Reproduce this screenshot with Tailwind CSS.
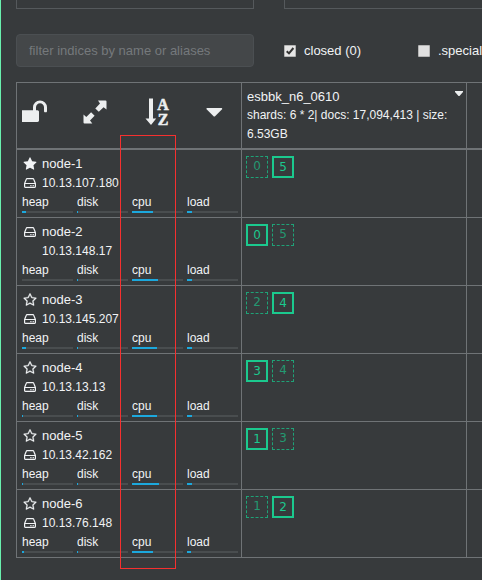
<!DOCTYPE html>
<html lang="en">
<head>
<meta charset="utf-8">
<title>Cluster overview</title>
<script src="https://cdn.jsdelivr.net/npm/@tailwindcss/browser@4"></script>
</head>
<body class="w-[482px] h-[580px] overflow-hidden bg-[#373a3c]">
<svg class="hidden">
  <symbol id="star" viewBox="0 0 1792 1792"><path fill="currentColor" d="M1728 647q0 22-26 48l-363 354 86 500q1 7 1 20 0 21-10.5 35.5t-30.5 14.5q-19 0-40-12l-449-236-449 236q-22 12-40 12-21 0-31.5-14.5t-10.5-35.5q0-6 2-20l86-500-364-354q-25-27-25-48 0-37 56-46l502-73 225-455q19-41 49-41t49 41l225 455 502 73q56 9 56 46z"/></symbol>
  <symbol id="star-o" viewBox="0 0 1792 1792"><path fill="currentColor" stroke="currentColor" stroke-width="35" d="M1201 1004l306-297-422-62-189-382-189 382-422 62 306 297-73 421 378-199 377 199zm527-357q0 22-26 48l-363 354 86 500q1 7 1 20 0 50-41 50-19 0-40-12l-449-236-449 236q-22 12-40 12-21 0-31.5-14.5t-10.5-35.5q0-6 2-20l86-500-364-354q-25-27-25-48 0-37 56-46l502-73 225-455q19-41 49-41t49 41l225 455 502 73q56 9 56 46z"/></symbol>
  <symbol id="hdd" viewBox="0 0 12 10"><path fill="none" stroke="currentColor" stroke-width="1.2" stroke-linejoin="round" d="M.6 5.5 2.3 1.2Q2.5.6 3.1.6H8.9Q9.5.6 9.7 1.2L11.4 5.5V8.6Q11.4 9.4 10.7 9.4H1.3Q.6 9.4.6 8.6ZM.6 5.5H11.4"/><path fill="currentColor" d="M6.3 7h1.2v1.2H6.3zM8.6 7h1.2v1.2H8.6z"/></symbol>
</svg>
<div class="relative flex flex-col w-[482px] h-[580px] overflow-hidden border-l border-[#69f0ae] pl-[15px] font-['Liberation_Sans',Arial,sans-serif] text-[13px] text-[#f1f3f5]">
  <div class="flex gap-[30px] h-[9px] shrink-0">
    <div class="w-[238px] shrink-0 border border-t-0 border-[#55595c]"></div>
    <div class="w-[238px] shrink-0 border border-t-0 border-[#55595c]"></div>
  </div>
  <div class="flex items-center mt-[25px] h-[33px] shrink-0">
    <div class="w-[238px] h-[33px] shrink-0 rounded border border-[#4b4f52] bg-[#444749] pl-3 leading-[31px] text-[#75797c]">filter indices by name or aliases</div>
    <div class="ml-[30px] w-[134px] shrink-0 flex items-center gap-2">
      <svg class="size-3" viewBox="0 0 12 12"><rect width="12" height="12" rx="1" fill="#b5b5b5"/><rect x="1" y="1" width="10" height="10" fill="#e6e6e6"/><path d="M2.7 6.2 5 8.4 9.4 3" fill="none" stroke="#333" stroke-width="2"/></svg>
      <span>closed (0)</span>
    </div>
    <div class="shrink-0 flex items-center gap-2">
      <svg class="size-3" viewBox="0 0 12 12"><rect width="12" height="12" rx="1" fill="#b5b5b5"/><rect x="1" y="1" width="10" height="10" fill="#e0e0e0"/></svg>
      <span>.special</span>
    </div>
  </div>

  <div class="mt-[15px] w-[500px] shrink-0 border-l border-t border-[#6f7376]">
    <div class="flex h-[67px] border-b-2 border-[#6f7376]">
      <div class="flex w-[225px] shrink-0 border-r border-[#6f7376]">
        <div class="flex w-[35px] pt-[17px] pl-[5px]">
          <svg class="w-[26px] h-[22px]" viewBox="64 100 1664 1436" preserveAspectRatio="none"><path fill="#eceeef" d="M1664 576v256q0 26-19 45t-45 19h-64q-26 0-45-19t-19-45v-256q0-106-75-181t-181-75-181 75-75 181v192h96q40 0 68 28t28 68v576q0 40-28 68t-68 28h-960q-40 0-68-28t-28-68v-576q0-40 28-68t68-28h672v-192q0-185 131.5-316.5t316.5-131.5 316.5 131.5 131.5 316.5z"/></svg>
        </div>
        <div class="flex w-[62px] pt-[17px] pl-[31px]">
          <svg class="size-6" viewBox="0 0 24 24"><path fill="#eceeef" d="M15 .5H22.5Q23.5.5 23.5 1.5V9.5L20.6 7.2 15.8 11.8 12.3 8.4 17 3.6ZM.5 14.5 3.3 17 8.1 12.3 11.6 15.8 7 20.6 9.3 23.5H1.5Q.5 23.5.5 22.5Z"/></svg>
        </div>
        <div class="flex w-[92px] pt-[15px] pl-[31px]">
          <svg class="w-[12px] h-[28px]" viewBox="0 0 12 28"><path fill="#eceeef" d="M4 .5H8V20.5H11.2L6 27 .5 20.5H4Z"/></svg>
          <div class="w-[12px] -mt-px text-center text-[16px] leading-[15px] font-bold text-[#eceeef] font-['Liberation_Serif',serif] [-webkit-text-stroke:0.5px_#eceeef]"><div>A</div><div>Z</div></div>
        </div>
        <svg class="w-[17px] h-[9px] mt-[25px]" viewBox="0 0 17 9"><path fill="#eceeef" d="M.8 0H15.8L16.3 1 8.8 8.6H7.8L.3 1Z"/></svg>
      </div>
      <div class="flex w-[225px] shrink-0 border-r border-[#6f7376] pl-[5px] pt-1 leading-[19px]">
        <div class="w-[208px]">
          <div>esbbk_n6_0610</div>
          <div class="text-[12px] whitespace-nowrap">shards: 6 * 2| docs: 17,094,413 | size:<br>6.53GB</div>
        </div>
        <svg class="w-[8px] h-[5px] mt-[4px]" viewBox="0 0 8 5"><path fill="#eceeef" d="M0 0H8V1L4.5 5H3.5L0 1Z"/></svg>
      </div>
    </div>
    <div id="rows"></div>
  </div>
  <div class="absolute left-[119px] top-[135px] w-[56px] h-[434px] border border-[#f5302f]"></div>
</div>
<script>
// name, icon, address, bar fill in px [heap, disk, cpu, load], shards [number, isPrimary]
const nodes = [
  ['node-1', 'star', '10.13.107.180', [4, 1, 21, 5], [[0, 0], [5, 1]]],
  ['node-2', '', '10.13.148.17', [0, 1, 26, 5], [[0, 1], [5, 0]]],
  ['node-3', 'star-o', '10.13.145.207', [4, 1, 25, 5], [[2, 0], [4, 1]]],
  ['node-4', 'star-o', '10.13.13.13', [1, 1, 25, 5], [[3, 1], [4, 0]]],
  ['node-5', 'star-o', '10.13.42.162', [1, 1, 27, 5], [[1, 1], [3, 0]]],
  ['node-6', 'star-o', '10.13.76.148', [2, 1, 21, 4], [[1, 0], [2, 1]]]
];
const star = n => `<svg class="size-[14px] -ml-px"><use href="#${n}"/></svg>`;
const hdd = '<svg class="w-[12px] h-[10px]"><use href="#hdd"/></svg>';
const labels = ['heap', 'disk', 'cpu', 'load'];
document.getElementById('rows').innerHTML = nodes.map(([name, icon, ip, bars, shards]) => `
  <div class="flex h-[68px] border-b border-[#6f7376]">
    <div class="w-[225px] shrink-0 border-r border-[#6f7376] pl-[5px] pt-1 leading-[19px]">
      <div class="flex items-center h-[19px] pl-[2px]"><span class="w-[18px]">${icon ? star(icon) : hdd}</span>${name}</div>
      <div class="flex items-center h-[19px] pl-[2px] text-[12px]"><span class="w-[18px]">${icon ? hdd : ''}</span><span class="pt-[2px]">${ip}</span></div>
      <div class="flex gap-1 text-[12px]">${labels.map((l, i) => `
        <div class="w-[51px]"><div class="h-[19px] leading-[21px]">${l}</div><div class="h-[2px] bg-[#494d4f]"><div class="h-[2px] bg-[#1ca8dd]" style="width:${bars[i]}px"></div></div></div>`).join('')}
      </div>
    </div>
    <div class="flex gap-1 w-[225px] shrink-0 border-r border-[#6f7376] pl-1 pt-[6px]">${shards.map(([n, p]) => p
      ? `<div class="size-[22px] border-2 border-[#1bc98e] text-[#1bc98e] text-[12px] leading-[18px] text-center font-['DejaVu_Sans',sans-serif]">${n}</div>`
      : `<div class="size-[22px] border border-dashed border-[#1fa277] text-[#249871] text-[12px] leading-[19px] text-center font-['DejaVu_Sans',sans-serif]">${n}</div>`).join('')}
    </div>
  </div>`).join('');
</script>
</body>
</html>
